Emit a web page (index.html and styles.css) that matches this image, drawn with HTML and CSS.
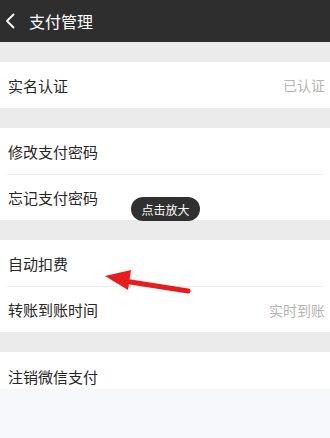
FILE: index.html
```html
<!DOCTYPE html>
<html lang="zh-CN">
<head>
<meta charset="utf-8">
<link rel="stylesheet" href="styles.css">
</head>
<body>
<div class="page">
  <header class="topbar">
    <svg class="back" width="10" height="16" viewBox="0 0 10 16"><path d="M8.5 1.5 L2 8 L8.5 14.5" fill="none" stroke="#fff" stroke-width="1.8" stroke-linecap="round" stroke-linejoin="round"/></svg>
    <span class="title">支付管理</span>
  </header>
  <div class="content">
    <section class="group">
      <div class="row"><span class="label">实名认证</span><span class="value">已认证</span></div>
    </section>
    <section class="group">
      <div class="row"><span class="label">修改支付密码</span></div>
      <div class="row"><span class="label">忘记支付密码</span></div>
    </section>
    <section class="group">
      <div class="row"><span class="label">自动扣费</span></div>
      <div class="row"><span class="label">转账到账时间</span><span class="value">实时到账</span></div>
    </section>
    <section class="group last">
      <div class="row"><span class="label">注销微信支付</span></div>
    </section>
    <div class="fill"></div>
    <div class="tip">点击放大</div>
    <svg class="arrow" width="330" height="438" viewBox="0 0 330 438">
      <line x1="124" y1="281" x2="188" y2="291" stroke="#e81c1c" stroke-width="5" stroke-linecap="round"/>
      <polygon points="105,276 131,270 128,290" fill="#e81c1c"/>
    </svg>
  </div>
</div>
</body>
</html>
```

FILE: styles.css
```css
html, body {
  margin: 0;
  padding: 0;
}
body {
  width: 330px;
  height: 438px;
  overflow: hidden;
  background: #ebebeb;
  font-family: "Noto Sans CJK SC", "Noto Sans", sans-serif;
}
.page {
  position: relative;
  height: 438px;
  display: flex;
  flex-direction: column;
}
.topbar {
  height: 42px;
  background: #2e2e2e;
  display: flex;
  align-items: center;
  padding-left: 5px;
  box-sizing: border-box;
  flex: none;
}
.back {
  display: block;
  margin-top: -1px;
}
.title {
  color: #fff;
  font-size: 16px;
  margin-left: 14px;
  line-height: 1;
}
.content {
  flex: 1;
  display: flex;
  flex-direction: column;
  padding-top: 20px;
  gap: 20px;
}
.group {
  background: #fff;
  padding: 0 7px;
}
.row {
  height: 46px;
  display: flex;
  align-items: center;
  justify-content: space-between;
  box-sizing: border-box;
}
.row + .row {
  border-top: 1px solid #ececec;
}
.label {
  font-size: 15px;
  color: #262626;
  padding-left: 1px;
}
.value {
  font-size: 14px;
  color: #b5b5b5;
  margin-right: -2px;
}
.group.last .row {
  height: 37px;
  align-items: flex-end;
  padding-bottom: 2px;
}
.fill {
  flex: 1;
  background: #f7f8fb;
  margin-top: -20px;
}
.tip {
  position: absolute;
  left: 131px;
  top: 197px;
  width: 69px;
  height: 24px;
  border-radius: 12px;
  background: #303030;
  color: #fff;
  font-size: 12px;
  display: flex;
  align-items: center;
  justify-content: center;
}
.arrow {
  position: absolute;
  left: 0;
  top: 0;
  pointer-events: none;
}
```
